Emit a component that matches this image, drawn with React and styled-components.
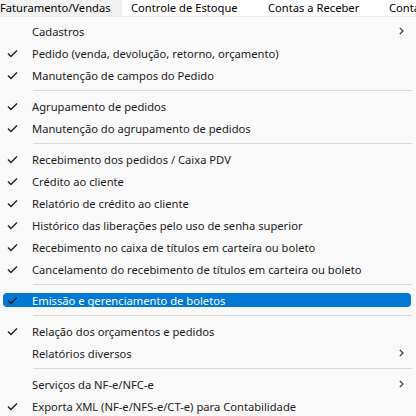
import React from "react";
import styled, { createGlobalStyle } from "styled-components";

const GlobalStyle = createGlobalStyle`
  html, body {
    margin: 0;
    padding: 0;
    background: #f9f9f9;
  }
  body {
    font-family: "Noto Sans", "Open Sans", sans-serif;
    font-size: 11px;
    color: #1b1b1b;
  }
`;

const topMenus = [
  { label: "Faturamento/Vendas", width: 122, pad: 0, active: true },
  { label: "Controle de Estoque", width: 137, pad: 9 },
  { label: "Contas a Receber", width: 121, pad: 9 },
  { label: "Contas a Pagar", width: 140, pad: 9 },
];

// "sep" marks a separator line
const items = [
  { label: "Cadastros", sub: true },
  { label: "Pedido (venda, devolução, retorno, orçamento)", check: true },
  { label: "Manutenção de campos do Pedido", check: true },
  "sep",
  { label: "Agrupamento de pedidos", check: true },
  { label: "Manutenção do agrupamento de pedidos", check: true },
  "sep",
  { label: "Recebimento dos pedidos / Caixa PDV", check: true },
  { label: "Crédito ao cliente", check: true },
  { label: "Relatório de crédito ao cliente", check: true },
  { label: "Histórico das liberações pelo uso de senha superior", check: true },
  { label: "Recebimento no caixa de títulos em carteira ou boleto", check: true },
  { label: "Cancelamento do recebimento de títulos em carteira ou boleto", check: true },
  "sep",
  { label: "Emissão e gerenciamento de boletos", check: true, selected: true },
  "sep",
  { label: "Relação dos orçamentos e pedidos", check: true },
  { label: "Relatórios diversos", sub: true },
  "sep",
  { label: "Serviços da NF-e/NFC-e", sub: true },
  { label: "Exporta XML (NF-e/NFS-e/CT-e) para Contabilidade", check: true },
];

function App() {
  return (
    <>
      <GlobalStyle />
      <Window>
        <MenuBar>
          {topMenus.map((m) => (
            <TopItem key={m.label} $width={m.width} $pad={m.pad} $active={m.active}>
              {m.label}
            </TopItem>
          ))}
        </MenuBar>
        <Dropdown>
          {items.map((it, i) =>
            it === "sep" ? (
              <Separator key={i} />
            ) : (
              <Row key={i}>
                <Highlight $selected={it.selected}>
                  <CheckCell>
                    {it.check && (
                      <svg width="11" height="9" viewBox="0 0 11 9">
                        <path
                          d="M1 4.6 L3.9 7.4 L10 1.4"
                          fill="none"
                          stroke="#1f1f1f"
                          strokeWidth="1.4"
                        />
                      </svg>
                    )}
                  </CheckCell>
                  <Label>{it.label}</Label>
                  {it.sub && (
                    <Arrow>
                      <svg width="5" height="8" viewBox="0 0 5 8">
                        <path d="M0.8 0.8 L4 4 L0.8 7.2" fill="none" stroke="#333" strokeWidth="1.2" />
                      </svg>
                    </Arrow>
                  )}
                </Highlight>
              </Row>
            )
          )}
        </Dropdown>
      </Window>
    </>
  );
}

export default App;

const Window = styled.div`
  width: 416px;
  height: 416px;
  overflow: hidden;
  background: #f9f9f9;
`;

const MenuBar = styled.div`
  display: flex;
  height: 16px;
  background: #ffffff;
  border-bottom: 1px solid #ececec;
  white-space: nowrap;
  overflow: hidden;
`;

const TopItem = styled.div`
  flex: 0 0 ${(p) => p.$width}px;
  padding-left: ${(p) => p.$pad}px;
  box-sizing: border-box;
  line-height: 15px;
  font-size: 11.2px;
  color: #000;
  overflow: hidden;
  background: ${(p) => (p.$active ? "#f2f2f2" : "#ffffff")};
`;

const Dropdown = styled.div`
  display: flex;
  flex-direction: column;
  padding-top: 3px;
`;

const Row = styled.div`
  height: 22px;
  display: flex;
  align-items: center;
  padding: 0 5px 0 3px;
`;

const Highlight = styled.div`
  flex: 1;
  height: 14px;
  display: flex;
  align-items: center;
  border-radius: 4px;
  background: ${(p) => (p.$selected ? "#0078d4" : "transparent")};
  color: ${(p) => (p.$selected ? "#ffffff" : "#1b1b1b")};
`;

const CheckCell = styled.div`
  width: 29px;
  display: flex;
  align-items: center;
  padding-left: 4px;
  box-sizing: border-box;
`;

const Label = styled.span`
  flex: 1;
  font-size: 11.2px;
  white-space: nowrap;
`;

const Arrow = styled.div`
  width: 12px;
  display: flex;
  align-items: center;
`;

const Separator = styled.div`
  height: 1px;
  margin: 4px 4px 4px 33px;
  background: #d9d9d9;
`;
